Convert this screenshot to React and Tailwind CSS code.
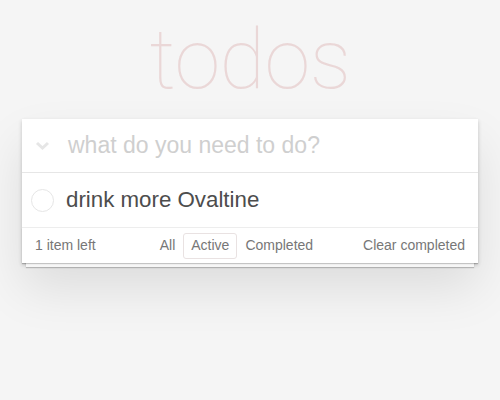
export default function App() {
  return (
    <div className="w-[500px] h-[400px] bg-[#f5f5f5] overflow-hidden" style={{ fontFamily: '"Liberation Sans", Arial, sans-serif' }}>
      <div className="mx-[22px] pt-[1px]">
        <h1 className="h-[118px] flex justify-center items-start pt-[17px] text-[83px] leading-none text-[rgba(175,47,47,0.15)] tracking-[-0.5px]" style={{ fontFamily: 'Roboto, "Open Sans", sans-serif', fontWeight: 100 }}>
          todos
        </h1>
        <div className="bg-white shadow-[0_2px_4px_rgba(0,0,0,0.2),0_25px_50px_rgba(0,0,0,0.1)]">
          <div className="h-[54px] flex items-center border-b border-[#e6e6e6]">
            <div className="w-[46px] flex pl-[13px]">
              <svg width="15" height="10" viewBox="0 0 15 10">
                <path d="M2 2 L7.5 7 L13 2" fill="none" stroke="#e6e6e6" strokeWidth="3" />
              </svg>
            </div>
            <div className="text-[23px] text-[#cfcfcf]">what do you need to do?</div>
          </div>
          <div className="h-[55px] flex items-center border-b border-[#ededed]">
            <div className="w-[44px] flex pl-[9px]">
              <div className="w-[23px] h-[23px] rounded-full border border-[#e6e6e6]"></div>
            </div>
            <div className="text-[22.3px] text-[#4d4d4d]">drink more Ovaltine</div>
          </div>
          <div className="relative h-[35px] flex items-center px-[13px] text-[14px] text-[#777] shadow-[0_1px_1px_rgba(0,0,0,0.2),0_8px_0_-4px_#f6f6f6,0_9px_1px_-4px_rgba(0,0,0,0.2)]">
            <span>1 item left</span>
            <div className="flex items-center ml-[56px]">
              <span className="px-[7px] py-[3px] border border-transparent rounded-[3px]">All</span>
              <span className="px-[7px] border border-[#e9e2e2] rounded-[3px] h-[26px] flex items-center">Active</span>
              <span className="px-[7px] py-[3px] border border-transparent rounded-[3px]">Completed</span>
            </div>
            <span className="ml-auto">Clear completed</span>
          </div>
        </div>
      </div>
    </div>
  );
}
